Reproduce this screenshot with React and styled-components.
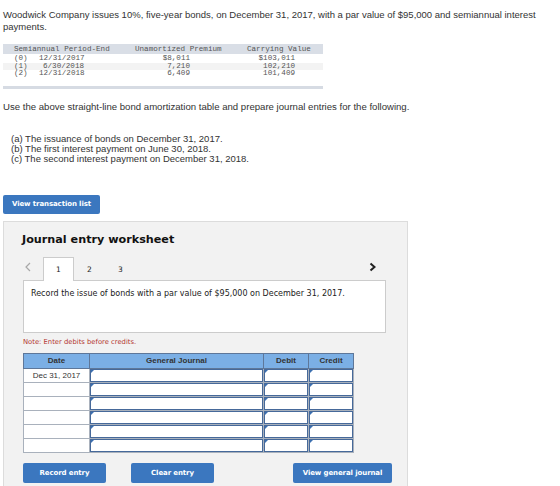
import React from "react";
import styled, { createGlobalStyle } from "styled-components";

const GlobalStyle = createGlobalStyle`
  html, body {
    margin: 0;
    padding: 0;
    background: #fff;
  }
  body {
    font-family: "Liberation Sans", Arial, sans-serif;
    color: #333;
  }
`;

const Page = styled.div`
  width: 560px;
  height: 486px;
  overflow: hidden;
  padding: 9px 3px 0;
  box-sizing: border-box;
`;

const Para = styled.p`
  margin: 0;
  font-size: 9.5px;
  line-height: 12px;
  color: #333;
  width: 545px;
`;

const AmortTable = styled.div`
  margin-top: 11px;
  width: 320px;
  font-family: "Liberation Mono", "Courier New", monospace;
  font-size: 7.6px;
  color: #555;
  border-bottom: 3px solid #d6dbe3;
  padding-bottom: 8px;
`;

const AmortRow = styled.div`
  display: grid;
  grid-template-columns: 121px 112px 1fr;
  padding-left: 11px;
  height: ${({ head }) => (head ? "10px" : "7.5px")};
  line-height: ${({ head }) => (head ? "10px" : "7.5px")};
  background: ${({ head, shade }) =>
    head ? "#d9dee6" : shade ? "#f3f3f3" : "transparent"};
  margin-bottom: ${({ head }) => (head ? "1px" : "0")};
  white-space: pre;
`;

const Cell = styled.span`
  display: inline-block;
  width: ${({ w }) => w}px;
  text-align: ${({ right }) => (right ? "right" : "left")};
`;

const UsePara = styled.p`
  margin: 12px 0 0;
  font-size: 9.6px;
  line-height: 12px;
`;

const TaskList = styled.div`
  margin: 21px 0 0 8px;
  font-size: 9.5px;
  line-height: 10px;
`;

const BlueButton = styled.button`
  font-family: "DejaVu Sans", Verdana, sans-serif;
  font-weight: bold;
  font-size: 7px;
  letter-spacing: -0.1px;
  color: #fff;
  background: #3b77bf;
  border: none;
  border-radius: 2px;
  height: ${({ h }) => h || 20}px;
  width: ${({ w }) => w}px;
  padding: 0;
  cursor: pointer;
`;

const TopButton = styled(BlueButton)`
  margin-top: 31px;
  display: block;
`;

const Worksheet = styled.div`
  margin-top: 7px;
  width: 405px;
  height: 300px;
  box-sizing: border-box;
  background: #f2f2f2;
  border: 1px solid #dcdcdc;
  padding: 11px 23px 0 18px;
  font-family: "DejaVu Sans", Verdana, sans-serif;
`;

const Title = styled.h2`
  margin: 0;
  font-size: 11.2px;
  font-weight: bold;
  color: #111;
  line-height: 14px;
`;

const TabBar = styled.div`
  display: flex;
  align-items: flex-end;
  margin-top: 8px;
  height: 25px;
`;

const ArrowBox = styled.span`
  width: 21px;
  box-sizing: border-box;
  align-self: center;
  padding-left: ${({ right }) => (right ? "0" : "3px")};
  display: flex;
  margin-right: ${({ right }) => (right ? "-6px" : "0")};
`;

const Tab = styled.div`
  width: 31px;
  height: 24px;
  box-sizing: border-box;
  display: flex;
  align-items: center;
  justify-content: center;
  font-size: 7.5px;
  color: #222;
  background: ${({ active }) => (active ? "#fff" : "transparent")};
  border: 1px solid ${({ active }) => (active ? "#ccc" : "transparent")};
  border-bottom: none;
  margin-bottom: -1px;
  position: relative;
  z-index: 1;
`;

const Spacer = styled.div`
  flex: 1;
`;

const Prompt = styled.div`
  margin-left: 1px;
  width: 363px;
  height: 53px;
  box-sizing: border-box;
  background: #fff;
  border: 1px solid #ccc;
  padding: 8px 7px;
  font-size: 8px;
  color: #222;
`;

const Note = styled.div`
  margin: 5px 0 0 1px;
  font-size: 6.8px;
  color: #b3362f;
`;

const Journal = styled.table`
  margin: 7px 0 0 1px;
  border-collapse: collapse;
  font-family: "Liberation Sans", Arial, sans-serif;
  font-size: 8px;
  color: #333;
`;

const Th = styled.th`
  background: #7bafe5;
  border: 1px solid #5e7799;
  height: 14px;
  padding: 0;
  width: ${({ w }) => w}px;
  font-weight: bold;
  color: #333;
`;

const DateCell = styled.td`
  border: 1px solid #a9b1bc;
  height: 13px;
  padding: 0;
  text-align: center;
  background: #fff;
`;

const InputCell = styled.td`
  border: 1px solid #a9b1bc;
  padding: 0;
  height: 13px;
  background: #fff;
`;

const Input = styled.div`
  height: 13px;
  box-sizing: border-box;
  border: 1.5px solid #46699a;
  border-top-width: 1px;
  position: relative;
  &::before {
    content: "";
    position: absolute;
    left: 0;
    top: 0;
    border-top: 3px solid #3b6fb0;
    border-right: 3px solid transparent;
  }
`;

const Actions = styled.div`
  display: flex;
  margin: 10px 0 0 1px;
  width: 369px;
  gap: 25px;
`;

const Push = styled.div`
  flex: 1;
`;

const rows = [
  { idx: "(0)", date: "12/31/2017", prem: "$8,011", carry: "$103,011" },
  { idx: "(1)", date: "6/30/2018", prem: "7,210", carry: "102,210", shade: true },
  { idx: "(2)", date: "12/31/2018", prem: "6,409", carry: "101,409" },
];

export default function App() {
  return (
    <Page>
      <GlobalStyle />
      <Para>
        Woodwick Company issues 10%, five-year bonds, on December 31, 2017, with a par
        value of $95,000 and semiannual interest payments.
      </Para>

      <AmortTable>
        <AmortRow head>
          <span>Semiannual Period-End</span>
          <span>Unamortized Premium</span>
          <span>Carrying Value</span>
        </AmortRow>
        {rows.map((r) => (
          <AmortRow key={r.idx} shade={r.shade}>
            <span>
              <Cell w={25}>{r.idx}</Cell>
              <Cell w={45} right>{r.date}</Cell>
            </span>
            <span>
              <Cell w={55} right>{r.prem}</Cell>
            </span>
            <span>
              <Cell w={48} right>{r.carry}</Cell>
            </span>
          </AmortRow>
        ))}
      </AmortTable>

      <UsePara>
        Use the above straight-line bond amortization table and prepare journal entries for
        the following.
      </UsePara>

      <TaskList>
        <div>(a) The issuance of bonds on December 31, 2017.</div>
        <div>(b) The first interest payment on June 30, 2018.</div>
        <div>(c) The second interest payment on December 31, 2018.</div>
      </TaskList>

      <TopButton w={97} h={19}>View transaction list</TopButton>

      <Worksheet>
        <Title>Journal entry worksheet</Title>
        <TabBar>
          <ArrowBox>
            <svg width="6" height="10" viewBox="0 0 6 10">
              <path d="M5 1 L1 5 L5 9" fill="none" stroke="#a8a8a8" strokeWidth="1.2" />
            </svg>
          </ArrowBox>
          <Tab active>1</Tab>
          <Tab>2</Tab>
          <Tab>3</Tab>
          <Spacer />
          <ArrowBox right>
            <svg width="7" height="10" viewBox="0 0 7 10">
              <path d="M1.5 1.5 L5.5 5 L1.5 8.5" fill="none" stroke="#222" strokeWidth="2" />
            </svg>
          </ArrowBox>
        </TabBar>
        <Prompt>Record the issue of bonds with a par value of $95,000 on December 31, 2017.</Prompt>
        <Note>Note: Enter debits before credits.</Note>

        <Journal>
          <thead>
            <tr>
              <Th w={65}>Date</Th>
              <Th w={173}>General Journal</Th>
              <Th w={44}>Debit</Th>
              <Th w={44}>Credit</Th>
            </tr>
          </thead>
          <tbody>
            {[0, 1, 2, 3, 4, 5].map((i) => (
              <tr key={i}>
                <DateCell>{i === 0 ? "Dec 31, 2017" : ""}</DateCell>
                <InputCell><Input /></InputCell>
                <InputCell><Input /></InputCell>
                <InputCell><Input /></InputCell>
              </tr>
            ))}
          </tbody>
        </Journal>

        <Actions>
          <BlueButton w={83} h={20}>Record entry</BlueButton>
          <BlueButton w={83} h={20}>Clear entry</BlueButton>
          <Push />
          <BlueButton w={99} h={20}>View general journal</BlueButton>
        </Actions>
      </Worksheet>
    </Page>
  );
}
